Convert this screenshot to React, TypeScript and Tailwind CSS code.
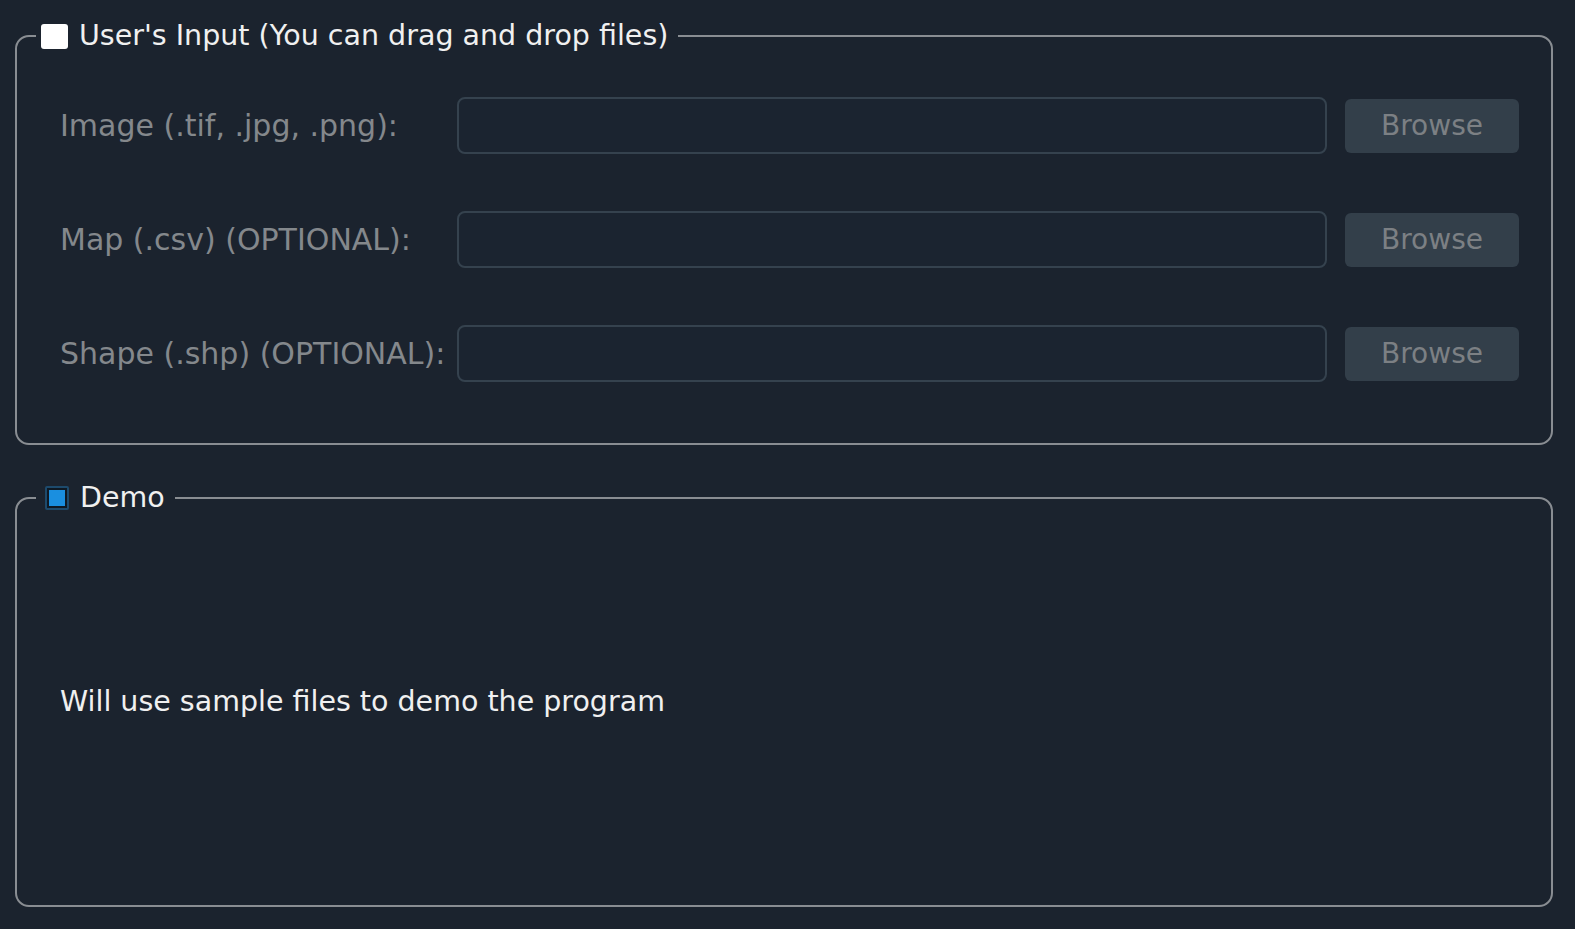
const FONT = { fontFamily: '"DejaVu Sans", sans-serif' } as const;

const ROWS = ['Image (.tif, .jpg, .png):', 'Map (.csv) (OPTIONAL):', 'Shape (.shp) (OPTIONAL):'];

function FileRow({ label }: { label: string }) {
  return (
    <div className="flex items-center h-[57px]">
      <label className="w-[397px] shrink-0 text-[30px] text-[#84888c]">{label}</label>
      <div className="flex-1 h-[57px] rounded-[8px] border-2 border-[#35424e] bg-[#1b2430]" />
      <button className="ml-[18px] w-[174px] h-[54px] rounded-[6px] bg-[#333f4a] text-[28px] text-[#7c8084]">
        Browse
      </button>
    </div>
  );
}

export default function App() {
  return (
    <div className="w-[1575px] h-[929px] bg-[#1b232e] overflow-hidden pt-[21px]" style={FONT}>
      <fieldset className="mx-[15px] w-[1538px] h-[424px] border-2 border-[#898d92] rounded-[14px]">
        <legend className="ml-[19px] pl-[5px] pr-[10px] flex items-center gap-[11px] h-[30px]">
          <span className="w-[27px] h-[25px] rounded-[3px] bg-white" />
          <span className="text-[28.5px] leading-[30px] text-[#f0f0f0]">User's Input (You can drag and drop files)</span>
        </legend>
        <div className="flex flex-col gap-[57px] pt-[46px] pl-[43px] pr-[32px]">
          {ROWS.map(r => <FileRow key={r} label={r} />)}
        </div>
      </fieldset>

      <fieldset className="mt-[38px] mx-[15px] w-[1538px] h-[424px] border-2 border-[#898d92] rounded-[14px]">
        <legend className="ml-[19px] pl-[9px] pr-[10px] flex items-center gap-[11px] h-[30px]">
          <span className="w-[24px] h-[24px] rounded-[2px] border-2 border-[#1d4a6c] bg-[#0e1924] flex items-center justify-center">
            <span className="w-[16px] h-[16px] bg-[#1a8fe0]" />
          </span>
          <span className="text-[28.5px] leading-[30px] text-[#f0f0f0]">Demo</span>
        </legend>
        <div className="h-[370px] flex items-center pl-[43px]">
          <p className="text-[28.5px] text-[#f0f0f0] mt-[8px]">Will use sample files to demo the program</p>
        </div>
      </fieldset>
    </div>
  );
}
